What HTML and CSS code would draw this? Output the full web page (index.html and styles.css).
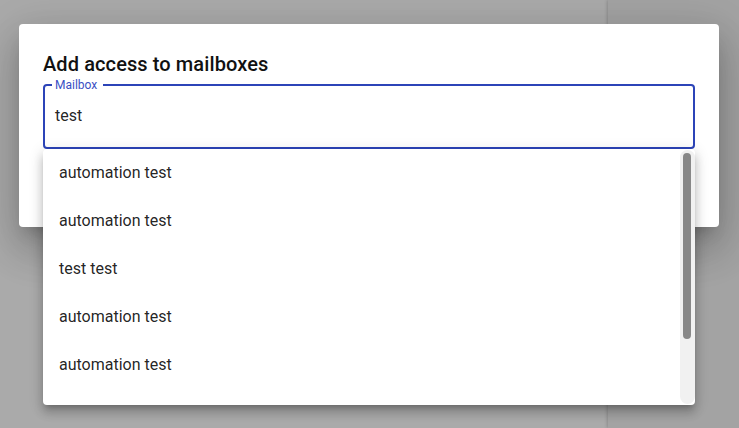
FILE: index.html
```html
<!DOCTYPE html>
<html lang="en">
<head>
<meta charset="utf-8">
<title>Add access to mailboxes</title>
<link rel="stylesheet" href="styles.css">
</head>
<body>
<div class="backdrop">
  <div class="side-panel"></div>
  <div class="dialog-wrap">
    <div class="dialog">
      <h2 class="dialog-title">Add access to mailboxes</h2>
      <div class="field">
        <span class="field-label">Mailbox</span>
        <span class="field-value">test</span>
        <div class="options">
          <ul class="option-list">
            <li class="option">automation test</li>
            <li class="option">automation test</li>
            <li class="option">test test</li>
            <li class="option">automation test</li>
            <li class="option">automation test</li>
          </ul>
          <div class="scrollbar"><div class="scroll-thumb"></div></div>
        </div>
      </div>
    </div>
  </div>
</div>
</body>
</html>
```
FILE: styles.css
```css
* { box-sizing: border-box; }
html, body { margin: 0; padding: 0; }
body {
  font-family: Roboto, "Liberation Sans", Arial, sans-serif;
  width: 739px;
  height: 428px;
  overflow: hidden;
  background: #aaaaaa;
}
.backdrop {
  position: relative;
  width: 739px;
  height: 428px;
  background: #aaaaaa;
}
.side-panel {
  position: absolute;
  left: 608px;
  top: 0;
  right: 0;
  bottom: 0;
  background: #a3a3a3;
  box-shadow: -1px 0 3px rgba(0, 0, 0, 0.18);
}
.dialog-wrap {
  position: relative;
  display: flex;
  padding: 24px 0 0 19px;
}
.dialog {
  width: 700px;
  height: 203px;
  background: #fff;
  border-radius: 4px;
  padding: 24px 24px 0;
  box-shadow: 0 11px 15px -7px rgba(0,0,0,0.2), 0 24px 38px 3px rgba(0,0,0,0.14), 0 9px 46px 8px rgba(0,0,0,0.12);
}
.dialog-title {
  margin: 0 0 4px;
  font-size: 20px;
  font-weight: 500;
  line-height: 32px;
  color: #111;
  letter-spacing: 0.1px;
}
.field {
  position: relative;
  height: 65px;
  border: 2px solid #2c44b8;
  border-radius: 4px;
  display: flex;
  align-items: center;
  padding: 0 10px 2px;
}
.field-label {
  position: absolute;
  left: 7px;
  top: -8px;
  padding: 0 6px 0 3px;
  background: #fff;
  font-size: 12px;
  line-height: 14px;
  color: #3a50c4;
}
.field-value {
  font-size: 16px;
  color: rgba(0, 0, 0, 0.87);
}
.options {
  position: absolute;
  left: -2px;
  right: -2px;
  top: 63px;
  height: 256px;
  display: flex;
  background: #fff;
  border-radius: 4px;
  overflow: hidden;
  z-index: 2;
  box-shadow: 0 5px 5px -3px rgba(0,0,0,0.2), 0 8px 10px 1px rgba(0,0,0,0.14), 0 3px 14px 2px rgba(0,0,0,0.12);
}
.option-list {
  flex: 1;
  margin: 0;
  padding: 0;
  list-style: none;
}
.option {
  height: 48px;
  display: flex;
  align-items: center;
  padding: 0 16px 2px;
  font-size: 16px;
  color: rgba(0, 0, 0, 0.87);
}
.scrollbar {
  width: 15px;
  margin: 1px 0 1px;
  background: #f1f1f1;
  border-radius: 8px;
  padding: 3px 4px 0 3px;
}
.scroll-thumb {
  height: 186px;
  background: #888;
  border-radius: 5px;
}
```
